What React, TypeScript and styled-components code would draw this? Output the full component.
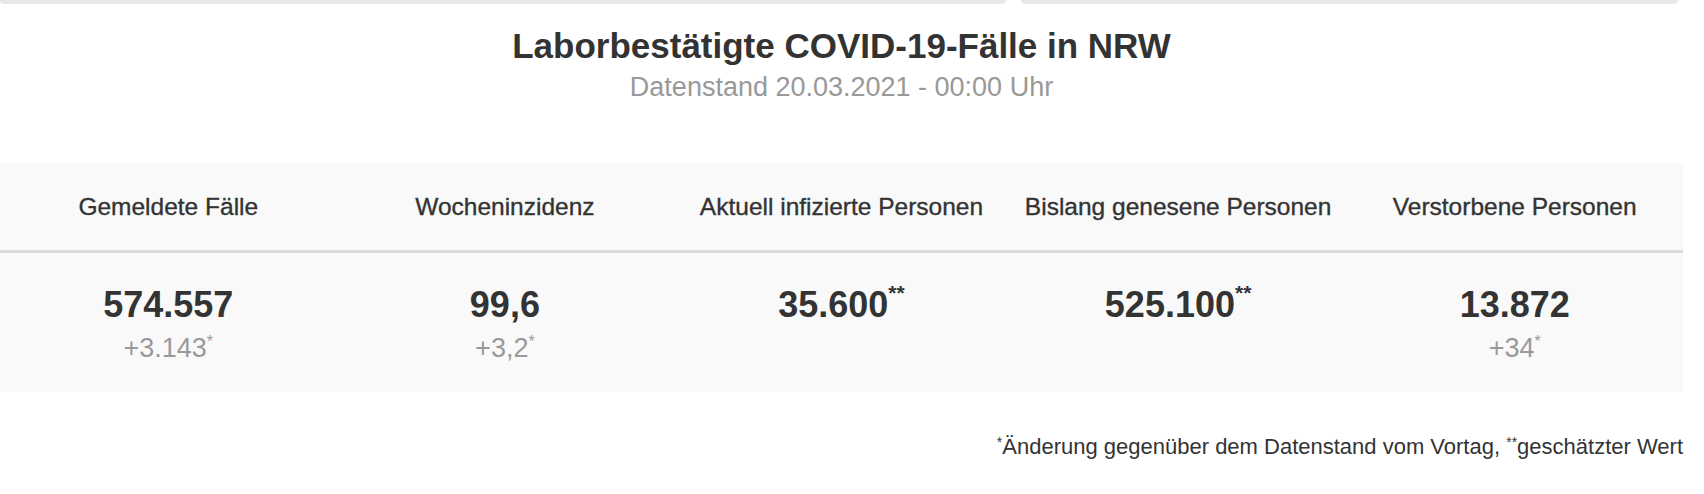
import React from 'react'
import styled, { createGlobalStyle } from 'styled-components'

const GlobalStyle = createGlobalStyle`
  body {
    margin: 0;
    background: #ffffff;
    font-family: "Liberation Sans", Arial, Helvetica, sans-serif;
    color: #333333;
  }
`;

const Page = styled.div`
  width: 1683px;
`;

const CardRow = styled.div`
  display: grid;
  grid-template-columns: 1006px 657px;
  gap: 15px;
`;

const CardStub = styled.div`
  height: 4px;
  background: #e8e8e8;
  border-radius: 0 0 5px 5px;
`;

const Heading = styled.header`
  text-align: center;
  padding-top: 22px;
`;

const Title = styled.h1`
  margin: 0;
  font-size: 35px;
  line-height: 40px;
  font-weight: bold;
  color: #333333;
`;

const Subtitle = styled.div`
  margin-top: 6px;
  font-size: 27px;
  line-height: 30px;
  color: #999999;
`;

const StatsTable = styled.div`
  margin-top: 61px;
  background: #f9f9f9;
  display: grid;
  grid-template-columns: repeat(5, 1fr);
`;

const HeaderCell = styled.div`
  height: 87px;
  border-bottom: 3px solid #dcdcdc;
  display: flex;
  align-items: center;
  justify-content: center;
  font-size: 24.5px;
  color: #333333;
  -webkit-text-stroke: 0.35px #333333;
  white-space: nowrap;
`;

const ValueCell = styled.div`
  padding: 32px 0 29px;
  text-align: center;
`;

const Number = styled.div`
  font-size: 36px;
  line-height: 40px;
  font-weight: bold;
  color: #333333;
`;

const Change = styled.div`
  margin-top: 8px;
  font-size: 27px;
  line-height: 30px;
  color: #999999;
`;

const Star = styled.sup<{ $size: number; $raise: number }>`
  font-size: ${p => p.$size}px;
  line-height: 0;
  vertical-align: ${p => p.$raise}px;
`;

const Footnote = styled.p`
  margin: 42px 0 0;
  text-align: right;
  font-size: 22px;
  line-height: 26px;
  color: #333333;
`;

const stats = [
  { label: 'Gemeldete Fälle', value: '574.557', change: '+3.143', estimated: false },
  { label: 'Wocheninzidenz', value: '99,6', change: '+3,2', estimated: false },
  { label: 'Aktuell infizierte Personen', value: '35.600', change: null, estimated: true },
  { label: 'Bislang genesene Personen', value: '525.100', change: null, estimated: true },
  { label: 'Verstorbene Personen', value: '13.872', change: '+34', estimated: false },
];

export default function App() {
  return (
    <Page>
      <GlobalStyle />
      <CardRow>
        <CardStub />
        <CardStub />
      </CardRow>
      <Heading>
        <Title>Laborbestätigte COVID-19-Fälle in NRW</Title>
        <Subtitle>Datenstand 20.03.2021 - 00:00 Uhr</Subtitle>
      </Heading>
      <StatsTable>
        {stats.map(s => (
          <HeaderCell key={s.label}>{s.label}</HeaderCell>
        ))}
        {stats.map(s => (
          <ValueCell key={s.label}>
            <Number>
              {s.value}
              {s.estimated && <Star $size={21} $raise={17}>**</Star>}
            </Number>
            {s.change && (
              <Change>
                {s.change}
                <Star $size={16} $raise={10}>*</Star>
              </Change>
            )}
          </ValueCell>
        ))}
      </StatsTable>
      <Footnote>
        <Star $size={14} $raise={7}>*</Star>Änderung gegenüber dem Datenstand vom Vortag,{' '}
        <Star $size={14} $raise={7}>**</Star>geschätzter Wert
      </Footnote>
    </Page>
  );
}
